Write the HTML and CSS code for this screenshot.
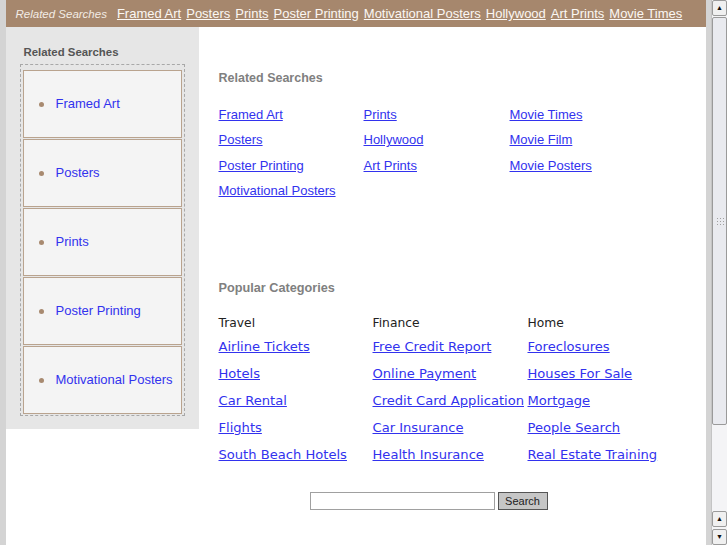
FILE: index.html
```html
<!DOCTYPE html>
<html lang="en">
<head>
    <meta charset="UTF-8">
    <meta name="viewport" content="width=device-width, initial-scale=1.0">
    <title>Related Searches</title>
    <link rel="stylesheet" href="styles.css">
</head>
<body>

    <div class="page">
        <div class="topbar">
            <span class="topbar-label">Related Searches</span>
            <a href="#">Framed Art</a>
            <a href="#">Posters</a>
            <a href="#">Prints</a>
            <a href="#">Poster Printing</a>
            <a href="#">Motivational Posters</a>
            <a href="#">Hollywood</a>
            <a href="#">Art Prints</a>
            <a href="#">Movie Times</a>
        </div>

        <div class="layout">
            <div class="sidebar">
                <h3>Related Searches</h3>
                <ul class="side-list">
                    <li><span class="dot"></span><a href="#">Framed Art</a></li>
                    <li><span class="dot"></span><a href="#">Posters</a></li>
                    <li><span class="dot"></span><a href="#">Prints</a></li>
                    <li><span class="dot"></span><a href="#">Poster Printing</a></li>
                    <li><span class="dot"></span><a href="#">Motivational Posters</a></li>
                </ul>
            </div>

            <div class="main">
                <h2>Related Searches</h2>
                <div class="related-grid">
                    <a href="#">Framed Art</a>
                    <a href="#">Prints</a>
                    <a href="#">Movie Times</a>
                    <a href="#">Posters</a>
                    <a href="#">Hollywood</a>
                    <a href="#">Movie Film</a>
                    <a href="#">Poster Printing</a>
                    <a href="#">Art Prints</a>
                    <a href="#">Movie Posters</a>
                    <a href="#">Motivational Posters</a>
                </div>

                <h2 class="popular-title">Popular Categories</h2>
                <div class="popular">
                    <div class="category">
                        <div class="category-name">Travel</div>
                        <a href="#">Airline Tickets</a>
                        <a href="#">Hotels</a>
                        <a href="#">Car Rental</a>
                        <a href="#">Flights</a>
                        <a href="#">South Beach Hotels</a>
                    </div>
                    <div class="category">
                        <div class="category-name">Finance</div>
                        <a href="#">Free Credit Report</a>
                        <a href="#">Online Payment</a>
                        <a href="#">Credit Card Application</a>
                        <a href="#">Car Insurance</a>
                        <a href="#">Health Insurance</a>
                    </div>
                    <div class="category">
                        <div class="category-name">Home</div>
                        <a href="#">Foreclosures</a>
                        <a href="#">Houses For Sale</a>
                        <a href="#">Mortgage</a>
                        <a href="#">People Search</a>
                        <a href="#">Real Estate Training</a>
                    </div>
                </div>

                <form class="search" onsubmit="return false">
                    <input type="text" class="search-input">
                    <button type="submit" class="search-btn">Search</button>
                </form>
            </div>
        </div>
    </div>

    <!-- window scrollbar, as it shows in the screenshot -->
    <div class="scrollbar">
        <div class="sb-btn">&#9650;</div>
        <div class="sb-thumb"><span class="sb-grip"></span></div>
        <div class="sb-track"></div>
        <div class="sb-btn">&#9650;</div>
        <div class="sb-btn">&#9660;</div>
    </div>

</body>
</html>
```

FILE: styles.css
```css
        html {
            background-color: #d4d4d4;
        }

        body {
            margin: 0;
            width: 711px;
            font-family: 'Liberation Sans', Arial, sans-serif;
            font-size: 13px;
        }

        a {
            color: #3232ee;
        }

        .page {
            width: 700px;
            margin: 0 auto;
            background-color: #FFFFFF;
            padding-bottom: 150px;
        }

        .topbar {
            display: flex;
            align-items: center;
            gap: 5px;
            height: 27px;
            padding-left: 10px;
            background-color: #a6876d;
            white-space: nowrap;
        }

        .topbar-label {
            font-style: italic;
            font-size: 11.5px;
            color: #f2ebe4;
            margin-right: 5px;
        }

        .topbar a {
            color: #fbf7f3;
        }

        .layout {
            display: flex;
            align-items: flex-start;
        }

        .sidebar {
            width: 193px;
            box-sizing: border-box;
            background-color: #e6e6e6;
            padding: 18px 0 13px 14px;
        }

        .sidebar h3 {
            margin: 0 0 5px 4px;
            font-size: 11.4px;
            line-height: 14px;
            color: #555555;
        }

        .side-list {
            list-style: none;
            margin: 0;
            width: 165px;
            box-sizing: border-box;
            padding: 5px 2px 1px 2px;
            border: 1px dashed #a8a8a8;
        }

        .side-list li {
            display: flex;
            align-items: center;
            height: 66px;
            margin-bottom: 1px;
            background-color: #f4f4f4;
            border: 1px solid #b9a38e;
        }

        .side-list li:last-child {
            margin-bottom: 0;
        }

        .side-list a {
            text-decoration: none;
            line-height: 16px;
        }

        .dot {
            width: 5px;
            height: 5px;
            border-radius: 50%;
            background-color: #a88a70;
            margin: 0 12px 0 15px;
        }

        .main {
            flex: 1;
            padding: 44px 20px 0 20px;
        }

        .main h2 {
            margin: 0;
            font-size: 12.5px;
            line-height: 14px;
            color: #808080;
        }

        .related-grid {
            display: grid;
            grid-template-columns: 145px 146px 146px;
            grid-auto-rows: 25.5px;
            align-items: center;
            margin-top: 16.5px;
        }

        .related-grid a {
            line-height: 15px;
            justify-self: start;
        }

        .main h2.popular-title {
            margin-top: 77.5px;
            font-size: 12.7px;
        }

        .popular {
            display: grid;
            grid-template-columns: 154px 155px 155px;
            margin-top: 20.5px;
            font-family: 'DejaVu Sans', sans-serif;
        }

        .category {
            display: flex;
            flex-direction: column;
            align-items: flex-start;
        }

        .category-name {
            font-size: 12.3px;
            line-height: 15px;
            color: #222222;
            margin-bottom: 2px;
        }

        .category a {
            font-size: 13.1px;
            line-height: 27px;
            white-space: nowrap;
        }

        .search {
            display: flex;
            gap: 3px;
            margin: 24.5px 0 0 91px;
        }

        .search-input {
            width: 185px;
            height: 18px;
            box-sizing: border-box;
            border: 1px solid #a0a0a0;
            padding: 0 2px;
            margin: 0;
        }

        .search-btn {
            width: 50px;
            height: 18px;
            box-sizing: border-box;
            padding: 0;
            margin: 0;
            font-family: 'Liberation Sans', Arial, sans-serif;
            font-size: 11px;
            color: #222222;
            background-color: #c6c6c6;
            border: 1px solid #555555;
            border-radius: 0;
        }

        .scrollbar {
            position: fixed;
            top: 0;
            right: 0;
            width: 16px;
            height: 100vh;
            display: flex;
            flex-direction: column;
            background-color: #f4f4f6;
            border-left: 1px solid #c4c4c4;
            box-sizing: border-box;
        }

        .sb-btn {
            height: 16px;
            flex-shrink: 0;
            box-sizing: border-box;
            border: 1px solid #9a9a9a;
            border-radius: 2px;
            background-color: #f0f0f0;
            font-size: 7px;
            line-height: 14px;
            text-align: center;
            color: #111111;
        }

        .sb-btn + .sb-btn {
            margin-top: 2px;
        }

        .sb-thumb {
            height: 408px;
            flex-shrink: 0;
            box-sizing: border-box;
            margin-top: 1px;
            border: 1px solid #9a9a9a;
            border-radius: 2px;
            background-color: #e9eaef;
            display: flex;
            align-items: center;
            justify-content: center;
        }

        .sb-grip {
            width: 8px;
            height: 8px;
            background-image: radial-gradient(#a0a0a0 0.8px, transparent 1px);
            background-size: 3px 3px;
        }

        .sb-track {
            flex: 1;
            margin-bottom: 2px;
        }
```
